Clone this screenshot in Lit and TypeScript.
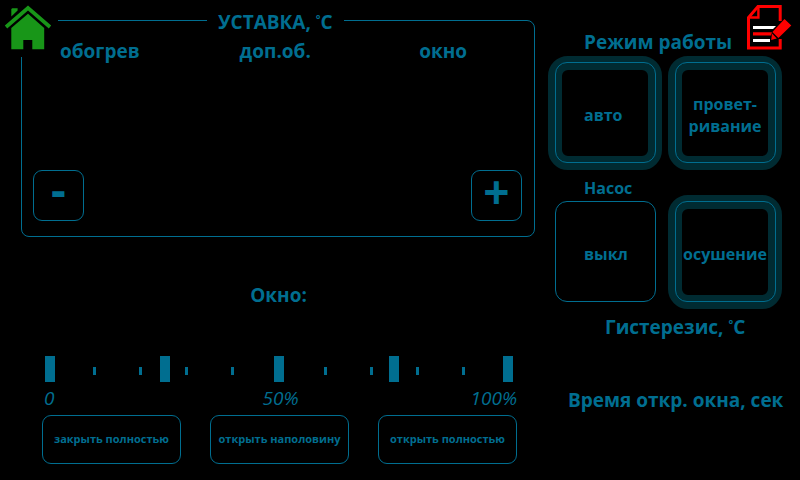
import { LitElement, html, css, svg } from "lit";
import { customElement } from "lit/decorators.js";

const homeIcon = svg`<svg viewBox="0 0 58 57" width="58" height="57" aria-hidden="true">
  <g fill="#189618">
    <path d="M28 5.6 L51.2 25.6 L48.8 28.4 L28 10.6 L7.2 28.4 L4.8 25.6 Z"/>
    <path d="M11.3 9 L12.3 8.3 H17.6 V10.6 L11.3 16.4 Z"/>
    <path d="M28 13.8 L44.2 28 V49.2 H32.3 V40 H23.3 V49.2 H11.3 V28 Z"/>
  </g>
</svg>`;

const editIcon = svg`<svg viewBox="0 0 48 46" width="48" height="46" aria-hidden="true">
  <g fill="none" stroke="#ff0000" stroke-width="3">
    <path d="M35.2 17 V2.5 H13 L3.5 13.5 V44 H35.2 V35"/>
    <path d="M13.4 2.5 V13.5 H3.5" stroke-width="2.4"/>
  </g>
  <path d="M8 22 H31 L28 25 H8 Z M8 35 H25 V38 H8 Z" fill="#fff"/>
  <path d="M8 28.2 H27 L26 31.6 H8 Z" fill="#ff0000"/>
  <path d="M39.5 15 L46.3 21.4 L33.4 34 L27.4 28 Z M27 29.6 L31.8 34.4 L26.2 36 Z" fill="#ff0000"/>
</svg>`;

const degC = html`<span class="deg">°</span>C`;

@customElement("app-root")
export class AppRoot extends LitElement {
  static styles = css`
    :host {
      --line: #006e90;
      --glow: #002b32;
      display: block;
      min-height: 100vh;
      box-sizing: border-box;
      background: #000;
      color: var(--line);
      font: 700 19px/24px "Open Sans", "Noto Sans", sans-serif;
      position: relative;
    }
    * {
      box-sizing: border-box;
    }
    button {
      font: inherit;
      color: inherit;
      background: none;
      padding: 0;
      margin: 0;
      cursor: pointer;
    }
    h2 {
      font: inherit;
      margin: 0;
      white-space: nowrap;
    }
    .home {
      position: absolute;
      left: 0;
      top: 0;
      background: #000;
      display: block;
    }
    .edit {
      position: absolute;
      right: 7px;
      top: 4px;
    }
    a svg {
      display: block;
    }
    .deg {
      font-size: 11px;
      line-height: 12px;
      vertical-align: 6px;
    }
    .page {
      display: flex;
      gap: 13px;
      padding: 6px 18px 16px 21px;
    }
    .main {
      flex: 1;
      min-width: 0;
    }
    .side {
      width: 234px;
      padding-top: 24px;
    }
    .setpoint {
      border: 1px solid var(--line);
      border-radius: 8px;
      margin: 0;
      padding: 0 12px 15px 11px;
      min-width: 0;
    }
    .setpoint legend {
      padding: 4px 11px 0;
      margin-left: 174px;
    }
    .names {
      display: grid;
      grid-template-columns: 180fr 180fr 103fr;
      padding: 5px 0 107px 27px;
    }
    .steps {
      display: flex;
      justify-content: space-between;
    }
    .step {
      width: 51px;
      height: 51px;
      border: 1px solid var(--line);
      border-radius: 9px;
      font-size: 46px;
      line-height: 36px;
      padding-bottom: 10px;
    }
    .minus {
      padding-bottom: 18px;
    }
    .window {
      padding: 46px 18px 0 21px;
    }
    .window h2 {
      text-align: center;
      padding-right: 2px;
    }
    .scale {
      display: grid;
      align-items: center;
      margin: 49px 4px 0 3px;
    }
    .ticks {
      grid-area: 1 / 1;
      display: flex;
      justify-content: space-between;
    }
    .minor {
      padding: 4px 2px 0;
    }
    .major i {
      width: 10px;
      height: 26px;
      background: var(--line);
    }
    .minor i {
      width: 3px;
      height: 8px;
      background: var(--line);
    }
    .minor i:nth-child(5n + 1) {
      visibility: hidden;
    }
    .marks {
      display: grid;
      grid-template-columns: 1fr auto 1fr;
      font-style: italic;
      font-weight: 400;
      padding: 4px 0 5px 2px;
    }
    .marks :last-child {
      text-align: right;
    }
    .actions {
      display: grid;
      grid-template-columns: repeat(3, 1fr);
      gap: 29px;
    }
    .action {
      height: 49px;
      border: 1px solid var(--line);
      border-radius: 9px;
      font-size: 11px;
      padding-bottom: 2px;
      white-space: nowrap;
    }
    .mode-title {
      padding: 0 0 2px 36px;
    }
    .modes {
      display: grid;
      grid-template-columns: 114px 114px;
      grid-template-rows: 114px 25px 114px;
      justify-content: space-between;
    }
    .mode {
      position: relative;
      border: 14px solid transparent;
      border-radius: 20px;
      font-size: 16px;
      line-height: 22px;
      padding-top: 4px;
    }
    .mode::after {
      content: "";
      position: absolute;
      inset: -8px -8px -7px -7px;
      border: 1px solid var(--line);
      border-radius: 12px;
    }
    .on {
      border-color: var(--glow);
    }
    .start {
      text-align: left;
      padding-left: 22px;
    }
    .pump {
      grid-column: 1 / -1;
      padding-left: 36px;
      font-size: 16px;
      line-height: 36px;
    }
    .hysteresis {
      padding: 6px 0 0 57px;
    }
    .time {
      padding: 49px 0 0 20px;
    }
  `;

  render() {
    return html`
      <div class="page">
        <main class="main">
          <fieldset class="setpoint">
            <legend>УСТАВКА, ${degC}</legend>
            <div class="names">
              <span>обогрев</span><span>доп.об.</span><span>окно</span>
            </div>
            <div class="steps">
              <button class="step minus">-</button>
              <button class="step">+</button>
            </div>
          </fieldset>
          <section class="window">
            <h2>Окно:</h2>
            <div class="scale">
              <div class="ticks major">${Array.from({ length: 5 }, () => html`<i></i>`)}</div>
              <div class="ticks minor">${Array.from({ length: 11 }, () => html`<i></i>`)}</div>
            </div>
            <div class="marks"><span>0</span><span>50%</span><span>100%</span></div>
            <div class="actions">
              <button class="action">закрыть полностью</button>
              <button class="action">открыть наполовину</button>
              <button class="action">открыть полностью</button>
            </div>
          </section>
        </main>
        <aside class="side">
          <h2 class="mode-title">Режим работы</h2>
          <div class="modes">
            <button class="mode on start">авто</button>
            <button class="mode on">провет-<br />ривание</button>
            <h2 class="pump">Насос</h2>
            <button class="mode start" aria-label="Насос: выкл">выкл</button>
            <button class="mode on">осушение</button>
          </div>
          <h2 class="hysteresis">Гистерезис, ${degC}</h2>
          <h2 class="time">Время откр. окна, сек</h2>
        </aside>
      </div>
      <a class="home" href="#home" aria-label="Домой">${homeIcon}</a>
      <a class="edit" href="#edit" aria-label="Журнал">${editIcon}</a>
    `;
  }
}
